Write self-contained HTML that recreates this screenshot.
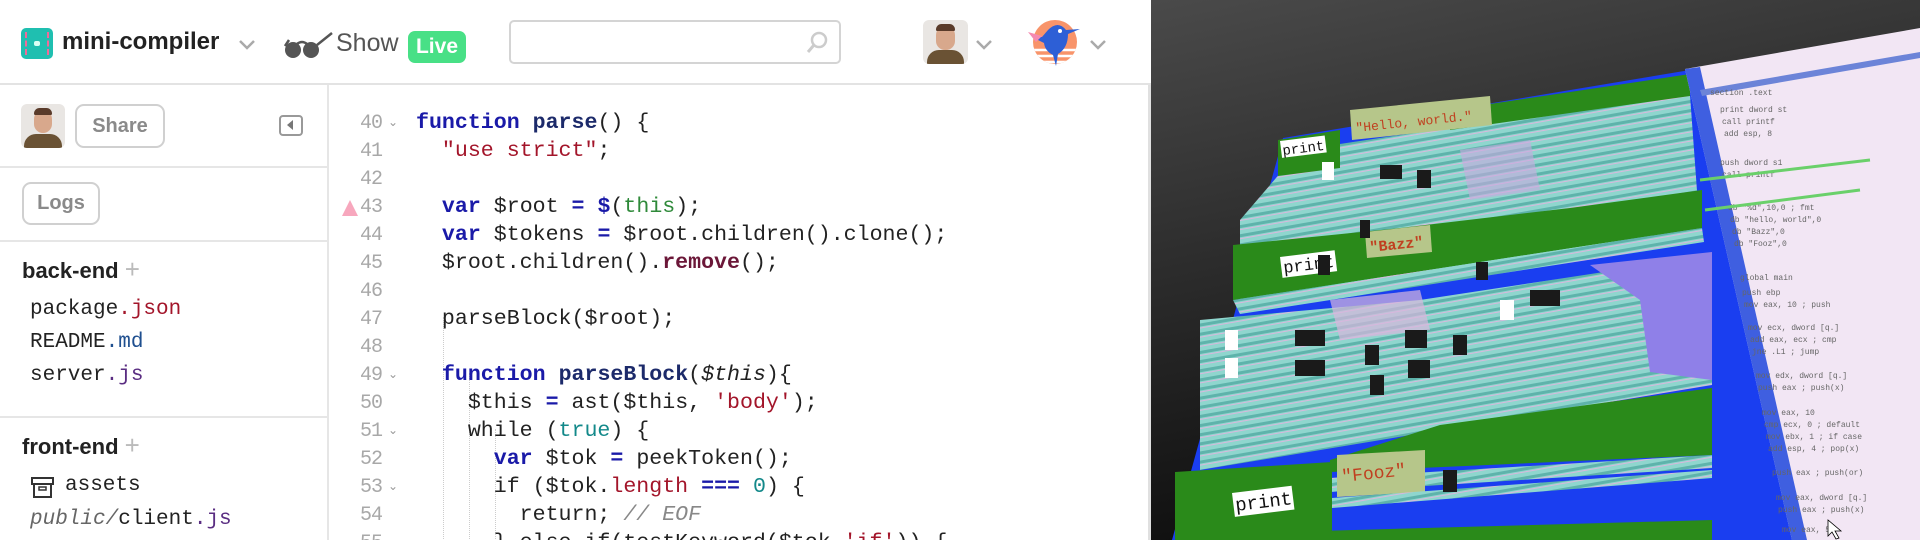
<!DOCTYPE html>
<html><head><meta charset="utf-8"><style>
*{box-sizing:border-box;margin:0;padding:0}
body{width:1920px;height:540px;overflow:hidden;background:#fff;font-family:"Liberation Sans",sans-serif;position:relative}
.abs{position:absolute}
.mono{font-family:"Liberation Mono",monospace}
.hdr{left:0;top:0;width:1151px;height:85px;border-bottom:2px solid #e3e3e3}
.btn{border:2px solid #d0d0d0;border-radius:9px;color:#8a8a8a;font-weight:bold;font-size:20px;text-align:center}
.sep{left:0;width:327px;height:2px;background:#e6e6e6}
.file{left:30px;font-size:21px;color:#222}
.code{left:328px;top:85px;width:822px;height:455px;overflow:hidden}
.ln{position:absolute;left:0;width:54px;text-align:right;color:#a8a8a8;font-size:20px;font-family:"Liberation Mono",monospace;letter-spacing:-1px}
.cl{position:absolute;left:88px;font-size:21.6px;white-space:pre;color:#222;font-family:"Liberation Mono",monospace}
.fold{position:absolute;left:60px;color:#999;font-size:12px}
.k{color:#1a1aa8;font-weight:bold}.s{color:#a3152a}.g{color:#2f8a3a}.m{color:#6b1738;font-weight:bold}.t{color:#13898a}.c{color:#888;font-style:italic}.o{color:#1a1aa8;font-weight:bold}
.guide{position:absolute;width:0;border-left:1px dotted #ccc}
</style></head><body>
<div class="abs hdr"></div>
<div class="abs" style="left:21px;top:28px;width:32px;height:31px;background:#1fbfb0;border-radius:5px"></div>
<div class="abs" style="left:25px;top:32px;width:24px;height:23px;border-left:2px dashed #f06a9a;border-right:2px dashed #f06a9a"></div>
<div class="abs" style="left:34px;top:41px;width:6px;height:5px;background:#d9fff5;border-radius:2px"></div>
<div class="abs" style="left:62px;top:28px;font-size:24px;font-weight:bold;color:#222">mini-compiler</div>
<svg class="abs" style="left:238px;top:38px" width="18" height="12"><path d="M2 3l7 7 7-7" fill="none" stroke="#aaa" stroke-width="2.5"/></svg>
<svg class="abs" style="left:284px;top:30px" width="50" height="30"><circle cx="9" cy="20" r="8" fill="#555"/><circle cx="27" cy="20" r="8" fill="#555"/><path d="M13 14q5-4 10 0M33 15L48 3M1 16l4-6" stroke="#555" stroke-width="2.5" fill="none"/></svg>
<div class="abs" style="left:336px;top:29px;font-size:25px;color:#555">Show</div>
<div class="abs" style="left:408px;top:31px;width:58px;height:32px;background:#48e086;border-radius:7px;color:#fff;font-weight:bold;font-size:21px;text-align:center;line-height:32px">Live</div>
<div class="abs" style="left:509px;top:20px;width:332px;height:44px;border:2px solid #d4d4d4;border-radius:5px"></div>
<svg class="abs" style="left:805px;top:30px" width="24" height="26"><circle cx="14" cy="10" r="7" fill="none" stroke="#ccc" stroke-width="2.5"/><path d="M9 15L3 22" stroke="#ccc" stroke-width="3"/></svg>
<div class="abs" style="left:923px;top:20px;width:45px;height:44px;border-radius:6px;background:#e9e6e3;overflow:hidden"><div class="abs" style="left:13px;top:6px;width:19px;height:24px;border-radius:9px;background:#d8a88c"></div><div class="abs" style="left:13px;top:4px;width:19px;height:7px;border-radius:8px 8px 2px 2px;background:#5a3b2a"></div><div class="abs" style="left:4px;top:30px;width:37px;height:18px;border-radius:12px 12px 0 0;background:#6a5234"></div></div>
<svg class="abs" style="left:975px;top:38px" width="18" height="12"><path d="M2 3l7 7 7-7" fill="none" stroke="#aaa" stroke-width="2.5"/></svg>
<svg class="abs" style="left:1020px;top:18px" width="62" height="50"><defs><clipPath id="cc"><circle cx="35" cy="24" r="22"/></clipPath></defs><circle cx="35" cy="24" r="22" fill="#f8946a"/><g clip-path="url(#cc)" stroke="#fff" stroke-width="2.5"><path d="M10 32h50M10 38h50M10 44h50"/></g><path d="M28 12q10-10 18 0l14-1-12 5q0 14-10 20l-2 12-3-11q-8-4-9-12l-12-6 10 0z" fill="#2d5fd6"/><path d="M8 14l14 4-6 6z" fill="#f58ab0"/><circle cx="40" cy="13" r="2" fill="#fff"/></svg>
<svg class="abs" style="left:1089px;top:38px" width="18" height="12"><path d="M2 3l7 7 7-7" fill="none" stroke="#aaa" stroke-width="2.5"/></svg>

<div class="abs" style="left:327px;top:85px;width:2px;height:455px;background:#e6e6e6"></div>
<div class="abs" style="left:21px;top:104px;width:44px;height:44px;border-radius:6px;background:#e9e6e3;overflow:hidden"><div class="abs" style="left:13px;top:6px;width:18px;height:23px;border-radius:9px;background:#d8a88c"></div><div class="abs" style="left:13px;top:4px;width:18px;height:7px;border-radius:8px 8px 2px 2px;background:#5a3b2a"></div><div class="abs" style="left:3px;top:30px;width:38px;height:18px;border-radius:12px 12px 0 0;background:#6a5234"></div></div>
<div class="abs btn" style="left:75px;top:104px;width:90px;height:44px;line-height:40px">Share</div>
<div class="abs" style="left:279px;top:115px;width:24px;height:21px;border:2px solid #999;border-radius:4px"></div>
<div class="abs" style="left:287px;top:120px;width:0;height:0;border-top:5px solid transparent;border-bottom:5px solid transparent;border-right:6px solid #777"></div>
<div class="abs sep" style="top:166px"></div>
<div class="abs btn" style="left:22px;top:182px;width:78px;height:43px;line-height:39px">Logs</div>
<div class="abs sep" style="top:240px"></div>
<div class="abs" style="left:22px;top:254px;font-size:22px;font-weight:bold;color:#222">back-end <span style="color:#bbb;font-weight:normal;font-size:26px">+</span></div>
<div class="abs mono file" style="top:298px">package<span style="color:#a3152a">.json</span></div>
<div class="abs mono file" style="top:331px">README<span style="color:#1f4f8f">.md</span></div>
<div class="abs mono file" style="top:364px">server<span style="color:#5a2d82">.js</span></div>
<div class="abs sep" style="top:416px"></div>
<div class="abs" style="left:22px;top:430px;font-size:22px;font-weight:bold;color:#222">front-end <span style="color:#bbb;font-weight:normal;font-size:26px">+</span></div>
<svg class="abs" style="left:30px;top:476px" width="26" height="24"><rect x="2" y="2" width="21" height="6" fill="none" stroke="#333" stroke-width="2"/><rect x="4" y="8" width="17" height="13" fill="none" stroke="#333" stroke-width="2"/><rect x="9" y="11" width="7" height="3" fill="none" stroke="#333" stroke-width="1.5"/></svg>
<div class="abs mono file" style="left:65px;top:474px">assets</div>
<div class="abs mono file" style="top:508px"><i style="color:#666">public/</i>client<span style="color:#5a2d82">.js</span></div>

<div class="abs code">
<div style="position:absolute;left:14px;top:115px;width:0;height:0;border-left:8px solid transparent;border-right:8px solid transparent;border-bottom:16px solid #f7a7bd"></div>
<div class="guide" style="left:115px;top:232px;height:230px"></div>
<div class="guide" style="left:141px;top:288px;height:170px"></div>
<div class="guide" style="left:167px;top:344px;height:120px"></div>
<div class="ln" style="top:27px">40</div><div class="fold" style="top:30px">⌄</div><div class="cl" style="top:26px"><span class="k">function</span> <b style="color:#1c2a6a">parse</b>() {</div>
<div class="ln" style="top:55px">41</div><div class="cl" style="top:54px">  <span class="s">"use strict"</span>;</div>
<div class="ln" style="top:83px">42</div>
<div class="ln" style="top:111px">43</div><div class="cl" style="top:110px">  <span class="k">var</span> $root <span class="o">=</span> <span class="o">$</span>(<span class="g">this</span>);</div>
<div class="ln" style="top:139px">44</div><div class="cl" style="top:138px">  <span class="k">var</span> $tokens <span class="o">=</span> $root.children().clone();</div>
<div class="ln" style="top:167px">45</div><div class="cl" style="top:166px">  $root.children().<span class="m">remove</span>();</div>
<div class="ln" style="top:195px">46</div>
<div class="ln" style="top:223px">47</div><div class="cl" style="top:222px">  parseBlock($root);</div>
<div class="ln" style="top:251px">48</div>
<div class="ln" style="top:279px">49</div><div class="fold" style="top:282px">⌄</div><div class="cl" style="top:278px">  <span class="k">function</span> <b style="color:#1c2a6a">parseBlock</b>(<i>$this</i>){</div>
<div class="ln" style="top:307px">50</div><div class="cl" style="top:306px">    $this <span class="o">=</span> ast($this, <span class="s">'body'</span>);</div>
<div class="ln" style="top:335px">51</div><div class="fold" style="top:338px">⌄</div><div class="cl" style="top:334px">    while (<span class="t">true</span>) {</div>
<div class="ln" style="top:363px">52</div><div class="cl" style="top:362px">      <span class="k">var</span> $tok <span class="o">=</span> peekToken();</div>
<div class="ln" style="top:391px">53</div><div class="fold" style="top:394px">⌄</div><div class="cl" style="top:390px">      if ($tok.<span class="s">length</span> <span class="o">===</span> <span class="t">0</span>) {</div>
<div class="ln" style="top:419px">54</div><div class="cl" style="top:418px">        return; <span class="c">// EOF</span></div>
<div class="ln" style="top:447px">55</div><div class="cl" style="top:446px">      } else if(testKeyword($tok,<span class="s">'if'</span>)) {</div>
</div>
<div class="abs" style="left:1148px;top:85px;width:3px;height:455px;background:#e0e0e0"></div>

<svg class="abs" style="left:1151px;top:0" width="769" height="540" viewBox="1151 0 769 540">
<defs>
<linearGradient id="bg" x1="0" y1="0" x2="0.3" y2="1"><stop offset="0" stop-color="#4a4a4a"/><stop offset="0.5" stop-color="#2a2a2a"/><stop offset="1" stop-color="#0c0c0c"/></linearGradient>
<pattern id="st" width="40" height="9" patternUnits="userSpaceOnUse" patternTransform="rotate(-10)"><rect width="40" height="9" fill="#8fd6ce"/><rect y="5" width="40" height="3" fill="#5eb3ab"/><rect y="0" width="40" height="1" fill="#d9b8dc"/></pattern>
</defs>
<rect x="1151" y="0" width="769" height="540" fill="url(#bg)"/>
<polygon points="1283,138 1690,70 1795,540 1172,540" fill="#1a3ef0"/>
<!-- upper teal mass -->
<polygon points="1300,150 1500,120 1690,95 1700,232 1240,300 1240,220" fill="url(#st)"/>
<polygon points="1460,150 1530,140 1540,190 1470,200" fill="#c8a8e0" opacity=".6"/>
<polygon points="1450,110 1690,74 1690,96 1450,130" fill="#2a8a1a"/>
<polygon points="1278,140 1340,130 1340,168 1278,176" fill="#2a8a1a"/>
<polygon points="1350,110 1490,96 1492,125 1352,140" fill="#b6c68a"/>
<text x="1356" y="132" font-family="Liberation Mono" font-size="13" fill="#c04020" transform="rotate(-6 1356 132)">"Hello, world."</text>
<!-- Bazz green band -->
<polygon points="1233,245 1400,228 1570,208 1702,190 1702,228 1233,300" fill="#2a8a1a"/>
<polygon points="1233,300 1702,228 1704,242 1240,314" fill="url(#st)"/>
<polygon points="1365,232 1430,225 1432,252 1367,258" fill="#b6c68a"/>
<text x="1370" y="252" font-family="Liberation Mono" font-size="15" font-weight="bold" fill="#c04020" transform="rotate(-6 1370 252)">"Bazz"</text>
<!-- lower teal mass + lavender -->
<polygon points="1200,320 1420,300 1650,265 1712,260 1712,385 1200,470" fill="url(#st)"/>
<polygon points="1590,265 1712,252 1712,380 1650,372 1640,300" fill="#8f80e8"/>
<polygon points="1330,300 1420,290 1430,330 1340,340" fill="#d7b7dd" opacity=".7"/>
<!-- green middle band -->
<polygon points="1440,425 1712,388 1712,455 1330,472 1330,460" fill="#2a8a1a"/>
<polygon points="1330,478 1712,455 1712,468 1330,492" fill="url(#st)"/>
<!-- bottom print row -->
<polygon points="1175,472 1332,462 1332,540 1175,540" fill="#2a8a1a"/>
<polygon points="1337,455 1425,450 1425,492 1337,497" fill="#b6c68a"/>
<text x="1342" y="482" font-family="Liberation Mono" font-size="18" fill="#c04020" transform="rotate(-6 1342 482)">"Fooz"</text>
<polygon points="1332,498 1712,470 1712,478 1332,508" fill="url(#st)"/>
<polygon points="1175,535 1712,520 1712,540 1175,540" fill="#2a8a1a"/>
<!-- labels -->
<g font-family="Liberation Mono" fill="#111">
<rect x="1280" y="141" width="45" height="17" fill="#fff" transform="rotate(-7 1280 141)"/><text x="1283" y="155" font-size="14" transform="rotate(-7 1283 155)">print</text>
<rect x="1280" y="257" width="55" height="21" fill="#fff" transform="rotate(-7 1280 257)"/><text x="1284" y="273" font-size="17" transform="rotate(-7 1284 273)">print</text>
<rect x="1232" y="493" width="60" height="24" fill="#fff" transform="rotate(-7 1232 493)"/><text x="1236" y="511" font-size="19" transform="rotate(-7 1236 511)">print</text>
<rect x="1322" y="162" width="12" height="18" fill="#fff"/><rect x="1225" y="330" width="13" height="20" fill="#fff"/><rect x="1225" y="358" width="13" height="20" fill="#fff"/><rect x="1500" y="300" width="14" height="20" fill="#fff"/>
<rect x="1295" y="330" width="30" height="16" fill="#1a1a1a"/><rect x="1295" y="360" width="30" height="16" fill="#1a1a1a"/>
<rect x="1530" y="290" width="30" height="16" fill="#1a1a1a"/><rect x="1360" y="220" width="10" height="18" fill="#1a1a1a"/>
<rect x="1405" y="330" width="22" height="18" fill="#1a1a1a"/><rect x="1408" y="360" width="22" height="18" fill="#1a1a1a"/>
<rect x="1365" y="345" width="14" height="20" fill="#1a1a1a"/><rect x="1370" y="375" width="14" height="20" fill="#1a1a1a"/>
<rect x="1453" y="335" width="14" height="20" fill="#1a1a1a"/><rect x="1443" y="470" width="14" height="22" fill="#1a1a1a"/>
<rect x="1476" y="262" width="12" height="18" fill="#1a1a1a"/><rect x="1318" y="255" width="12" height="20" fill="#1a1a1a"/>
<rect x="1417" y="170" width="14" height="18" fill="#1a1a1a"/><rect x="1380" y="165" width="22" height="14" fill="#1a1a1a"/>
</g>
<!-- paper -->
<polygon points="1685,69 1920,28 1920,540 1792,540" fill="#f2e6f4"/>
<polygon points="1685,69 1700,67 1807,540 1792,540" fill="#3f5fe0"/>
<polygon points="1700,90 1920,52 1920,58 1702,96" fill="#6c84d8"/>
<g font-family="Liberation Mono" font-size="8" fill="#666">
<text x="1710" y="95">section .text</text><text x="1720" y="112">print dword st</text><text x="1722" y="124">call printf</text><text x="1724" y="136">add esp, 8</text>
<text x="1720" y="165">push dword s1</text><text x="1722" y="177">call printf</text>
<text x="1728" y="210">db "%d",10,0 ; fmt</text><text x="1730" y="222">db "hello, world",0</text><text x="1732" y="234">db "Bazz",0</text><text x="1734" y="246">db "Fooz",0</text>
<text x="1740" y="280">global main</text><text x="1742" y="295">push ebp</text><text x="1744" y="307">mov eax, 10 ; push</text>
<text x="1748" y="330">mov ecx, dword [q.]</text><text x="1750" y="342">add eax, ecx ; cmp</text><text x="1752" y="354">jne .L1 ; jump</text>
<text x="1756" y="378">mov edx, dword [q.]</text><text x="1758" y="390">push eax ; push(x)</text>
<text x="1762" y="415">mov eax, 10</text><text x="1764" y="427">cmp ecx, 0 ; default</text><text x="1766" y="439">mov ebx, 1 ; if case</text><text x="1768" y="451">add esp, 4 ; pop(x)</text>
<text x="1772" y="475">push eax ; push(or)</text><text x="1776" y="500">mov eax, dword [q.]</text><text x="1778" y="512">push eax ; push(x)</text><text x="1782" y="532">mov eax, 5</text>
</g>
<path d="M1700 180L1870 160M1705 210L1860 190" stroke="#6ad06a" stroke-width="3"/>
<path d="M1828 520l0 16 4-4 4 7 3-1-4-7 6 0z" fill="#fff" stroke="#000" stroke-width=".8"/>
</svg>
</body></html>
